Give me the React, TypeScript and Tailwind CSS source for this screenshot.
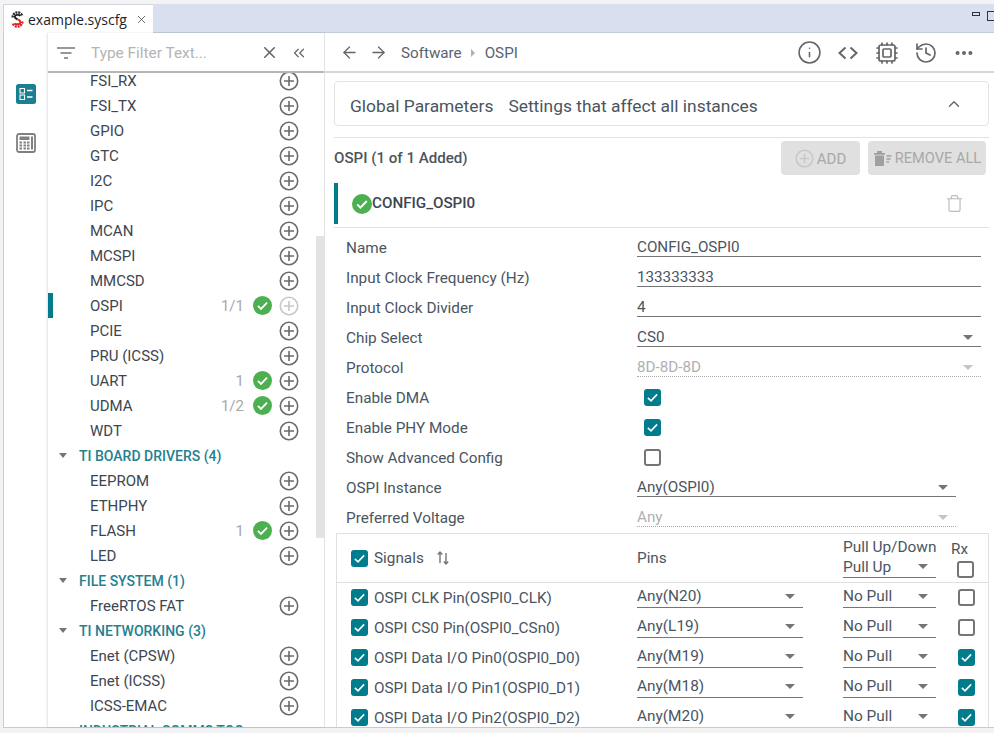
import React from 'react';
import { ArrowLeft, ArrowRight, ChevronsLeft, ChevronUp, Cpu, History, Info, MoreHorizontal, Trash, X } from 'lucide-react';

const TEAL = 'bg-[#007c8c]';

function PlusCircle({ faded, size = 20 }: { faded?: boolean; size?: number }) {
  const color = faded ? '#c8c8c8' : '#6b6b6b';
  return (
    <svg width={size} height={size} viewBox="0 0 20 20" fill="none" stroke={color} strokeWidth="1.6" className="shrink-0">
      <circle cx="10" cy="10" r="8.7" />
      <path d="M10 5v10M5 10h10" />
    </svg>
  );
}

function GreenCheck({ size = 19 }: { size?: number }) {
  return (
    <svg width={size} height={size} viewBox="0 0 20 20" className="shrink-0">
      <circle cx="10" cy="10" r="10" fill="#4caf50" />
      <path d="M5.2 10.4l3.2 3.2 6.4-6.6" fill="none" stroke="#fff" strokeWidth="1.9" />
    </svg>
  );
}

function Check({ on }: { on?: boolean }) {
  if (!on) return <span className="block h-[17px] w-[17px] rounded-[3px] border-2 border-[#757575] bg-white" />;
  return (
    <span className={`flex h-[17px] w-[17px] items-center justify-center rounded-[3px] ${TEAL}`}>
      <svg width="13" height="13" viewBox="0 0 14 14" fill="none" stroke="#fff" strokeWidth="1.7">
        <path d="M2 7.4l3.4 3.2L12 3.6" />
      </svg>
    </span>
  );
}

function Caret({ light }: { light?: boolean }) {
  return <span className={`h-0 w-0 border-x-[5px] border-t-[5px] border-x-transparent ${light ? 'border-t-[#c4c4c4]' : 'border-t-[#757575]'}`} />;
}

function SysCfgLogo() {
  return (
    <svg width="13" height="17" viewBox="0 0 13 17" fill="none" className="shrink-0">
      <path d="M1.6 6.5A5 5 0 0 1 11.4 5" stroke="#333" strokeWidth="2.4" strokeDasharray="2 0.8" />
      <path d="M11.4 10.5A5 5 0 0 1 1.6 12" stroke="#e02020" strokeWidth="2.4" strokeDasharray="2 0.8" />
      <path d="M9.5 4.8C8.5 3.6 4 3.2 3.8 5.8 3.7 7.4 6 8 6.5 8.4" stroke="#222" strokeWidth="1.9" />
      <path d="M6.5 8.4c1.5.4 3 1 2.8 3C9 13.8 4.5 13.6 3.5 12.3" stroke="#e02020" strokeWidth="1.9" />
    </svg>
  );
}

type Item = { name: string; count?: string; ok?: boolean; faded?: boolean; active?: boolean };

function TreeRow({ item }: { item: Item }) {
  return (
    <div className="relative flex h-[25px] items-center pl-[42px] pr-[25px] text-[15px] text-[#3d4650]">
      {item.active && <span className={`absolute bottom-0 left-0 top-0 w-[5px] ${TEAL}`} />}
      <span className="flex-1 pt-[1px]">{item.name}</span>
      {item.count && <span className="mr-[9px] pt-[1px] text-[#a8a8a8]">{item.count}</span>}
      {item.ok && <span className="mr-[7px] flex"><GreenCheck /></span>}
      <PlusCircle faded={item.faded} />
    </div>
  );
}

function GroupRow({ label }: { label: string }) {
  return (
    <div className="flex h-[25px] items-center pl-[11px] text-[14px] font-medium text-[#25808f]">
      <span className="mr-[12px] h-0 w-0 border-x-[4.5px] border-t-[5px] border-x-transparent border-t-[#757575]" />
      <span className="pt-[1px]">{label}</span>
    </div>
  );
}

const groupOne: Item[] = [
  { name: 'FSI_RX' },
  { name: 'FSI_TX' },
  { name: 'GPIO' },
  { name: 'GTC' },
  { name: 'I2C' },
  { name: 'IPC' },
  { name: 'MCAN' },
  { name: 'MCSPI' },
  { name: 'MMCSD' },
  { name: 'OSPI', count: '1/1', ok: true, faded: true, active: true },
  { name: 'PCIE' },
  { name: 'PRU (ICSS)' },
  { name: 'UART', count: '1', ok: true },
  { name: 'UDMA', count: '1/2', ok: true },
  { name: 'WDT' },
];

const boardDrivers: Item[] = [
  { name: 'EEPROM' },
  { name: 'ETHPHY' },
  { name: 'FLASH', count: '1', ok: true },
  { name: 'LED' },
];

const networking: Item[] = [{ name: 'Enet (CPSW)' }, { name: 'Enet (ICSS)' }, { name: 'ICSS-EMAC' }];

function Sidebar() {
  return (
    <aside className="flex w-[277px] shrink-0 flex-col border-r border-[#e2e2e2] bg-white shadow-[-1px_0_2px_rgba(0,0,0,0.12)]">
      <div className="flex h-[40px] shrink-0 items-center border-b-2 border-[#b5b5b5] pl-[9px] pr-[16px] pt-[1px]">
        <svg width="18" height="14" viewBox="0 0 18 14" stroke="#757575" strokeWidth="1.6" className="shrink-0">
          <path d="M0 2h18M3.5 7h11M7 12h4" />
        </svg>
        <span className="ml-[16px] flex-1 pt-[2px] text-[15.4px] text-[#b4b4b4]">Type Filter Text...</span>
        <X size={19} strokeWidth={2} color="#666" className="mr-[11px]" />
        <ChevronsLeft size={18} strokeWidth={1.6} color="#666" />
      </div>
      <div className="relative min-h-0 flex-1 overflow-hidden">
        <div className="mt-[-5px]">
          {groupOne.map((item) => <TreeRow key={item.name} item={item} />)}
          <GroupRow label="TI BOARD DRIVERS (4)" />
          {boardDrivers.map((item) => <TreeRow key={item.name} item={item} />)}
          <GroupRow label="FILE SYSTEM (1)" />
          <TreeRow item={{ name: 'FreeRTOS FAT' }} />
          <GroupRow label="TI NETWORKING (3)" />
          {networking.map((item) => <TreeRow key={item.name} item={item} />)}
          <GroupRow label="INDUSTRIAL COMMS TOO" />
        </div>
        <div className="absolute bottom-0 right-0 top-0 w-[8px] bg-white">
          <div className="mt-[163px] h-[302px] w-full bg-[#e3e3e3]" />
        </div>
      </div>
    </aside>
  );
}

function ConfigRow({ label, children }: { label: string; children: React.ReactNode }) {
  return (
    <div className="flex h-[30px] items-center pl-[12px] text-[15.3px] text-[#4a5560]">
      <span className="w-[291px] shrink-0">{label}</span>
      {children}
    </div>
  );
}

function Field({ value, select, disabled, narrow }: { value: string; select?: boolean; disabled?: boolean; narrow?: boolean }) {
  return (
    <div className={`flex h-[18px] items-center justify-between pr-[8px] text-[15.2px] ${narrow ? 'w-[319px]' : 'w-[344px]'} ${disabled ? 'border-b border-dotted border-[#aaa] text-[#b0b0b0]' : 'border-b border-[#757575] text-[#4a5560]'}`}>
      <span>{value}</span>
      {select && <Caret light={disabled} />}
    </div>
  );
}

function MiniSelect({ value, width }: { value: string; width: string }) {
  return (
    <div className={`mb-[2px] flex h-[21px] shrink-0 items-center justify-between border-b border-[#757575] pr-[8px] text-[15.4px] text-[#4a5560] ${width}`}>
      <span>{value}</span>
      <Caret />
    </div>
  );
}

const signals = [
  { name: 'OSPI CLK Pin(OSPI0_CLK)', pin: 'Any(N20)', rx: false },
  { name: 'OSPI CS0 Pin(OSPI0_CSn0)', pin: 'Any(L19)', rx: false },
  { name: 'OSPI Data I/O Pin0(OSPI0_D0)', pin: 'Any(M19)', rx: true },
  { name: 'OSPI Data I/O Pin1(OSPI0_D1)', pin: 'Any(M18)', rx: true },
  { name: 'OSPI Data I/O Pin2(OSPI0_D2)', pin: 'Any(M20)', rx: true },
];

function SignalsTable() {
  return (
    <div className="ml-[2px] border border-[#e0e0e0] border-b-0">
      <div className="flex h-[49px] items-center border-b border-[#e0e0e0] pl-[14px]">
        <div className="flex w-[286px] shrink-0 items-center">
          <Check on />
          <span className="ml-[6px] text-[15.3px] text-[#4a5560]">Signals</span>
          <svg width="14" height="16" viewBox="0 0 14 16" fill="none" stroke="#757575" strokeWidth="1.4" className="ml-[12px]">
            <path d="M4 13V2M1.8 4.5L4 2l2.2 2.5M10 3v11M7.8 11.5L10 14l2.2-2.5" />
          </svg>
        </div>
        <span className="w-[206px] shrink-0 text-[15.3px] text-[#4a5560]">Pins</span>
        <div className="w-[93px] shrink-0 text-[15.4px] leading-[20px] text-[#4a5560]">
          <div className="whitespace-nowrap">Pull Up/Down</div>
          <MiniSelect value="Pull Up" width="w-[93px]" />
        </div>
        <div className="ml-[15px] flex flex-col text-[15.3px] leading-[20px] text-[#4a5560]">
          <span>Rx</span>
          <span className="ml-[6px] mt-[2px]"><Check /></span>
        </div>
      </div>
      {signals.map((s) => (
        <div key={s.name} className="flex h-[30px] items-center pl-[14px]">
          <div className="flex w-[286px] shrink-0 items-center">
            <span className="mb-[2px]"><Check on /></span>
            <span className="ml-[6px] text-[15.3px] text-[#4a5560]">{s.name}</span>
          </div>
          <div className="w-[206px] shrink-0"><MiniSelect value={s.pin} width="w-[166px]" /></div>
          <MiniSelect value="No Pull" width="w-[93px]" />
          <span className="mb-[2px] ml-[22px]"><Check on={s.rx} /></span>
        </div>
      ))}
    </div>
  );
}

function MainPanel() {
  return (
    <main className="min-w-0 flex-1 overflow-hidden bg-white">
      <div className="flex h-[40px] items-center border-b-2 border-[#d6d6d6] pl-[15px] pr-[19px] pt-[1px] text-[#666]">
        <ArrowLeft size={19} strokeWidth={1.6} />
        <ArrowRight size={19} strokeWidth={1.6} className="ml-[10px]" />
        <span className="ml-[13px] pt-[2px] text-[15.2px] text-[#5a6470]">Software</span>
        <span className="ml-[9px] mr-[10px] h-0 w-0 border-y-[4px] border-l-[4px] border-y-transparent border-l-[#b0b0b0]" />
        <span className="pt-[2px] text-[15.2px] text-[#5a6470]">OSPI</span>
        <span className="flex-1" />
        <Info size={25} strokeWidth={1.5} />
        <svg width="24" height="24" viewBox="0 0 24 24" fill="none" stroke="currentColor" strokeWidth="2" className="ml-[14px]">
          <path d="M9.5 6.5L3.5 12l6 5.5M14.5 6.5l6 5.5-6 5.5" />
        </svg>
        <Cpu size={24} strokeWidth={1.7} className="ml-[15px]" />
        <History size={24} strokeWidth={1.7} className="ml-[15px]" />
        <MoreHorizontal size={22} strokeWidth={2.4} className="ml-[15px]" />
      </div>
      <div className="pl-[9px] pr-[5px]">
        <div className="mt-[8px] flex h-[45px] items-center rounded-[4px] border border-[#e3e3e3] pl-[15px] pr-[25px] text-[17.4px] text-[#4a5560]">
          <span className="pt-[5px]">Global Parameters</span>
          <span className="ml-[15px] flex-1 pt-[5px]">Settings that affect all instances</span>
          <ChevronUp size={18} strokeWidth={1.8} color="#666" />
        </div>
        <div className="mt-[11px] flex h-[41px] items-center border-t border-[#e3e3e3] pr-[3px]">
          <span className="flex-1 text-[15.1px] font-medium text-[#4a5560]">OSPI (1 of 1 Added)</span>
          <div className="flex h-[34px] w-[79px] items-center justify-center rounded-[4px] bg-[#e0e0e0] text-[15px] text-[#a8a8a8]">
            <PlusCircle faded size={19} />
            <span className="ml-[3px] pt-[2px]">ADD</span>
          </div>
          <div className="ml-[8px] flex h-[34px] w-[118px] items-center justify-center rounded-[4px] bg-[#e0e0e0] text-[14.6px] text-[#a8a8a8]">
            <svg width="20" height="17" viewBox="0 0 20 17" className="shrink-0">
              <path d="M1 3h11v1.8H1zM4 1h5v2H4zM2 5.5h9V16H2z" fill="#a0a0a0" />
              <path d="M13.5 6h5M13.5 9h4M13.5 12h2.5" stroke="#a0a0a0" strokeWidth="1.3" />
            </svg>
            <span className="ml-[2px] whitespace-nowrap pt-[2px]">REMOVE ALL</span>
          </div>
        </div>
        <div className="mt-[5px] flex items-start border-b border-[#e3e3e3] pb-[3px] pr-[25px]">
          <span className={`h-[41px] w-[4px] ${TEAL}`} />
          <div className="flex h-[41px] flex-1 items-center">
            <span className="ml-[14px]"><GreenCheck size={20} /></span>
            <span className="flex-1 text-[15.2px] font-medium text-[#3d4650]">CONFIG_OSPI0</span>
            <Trash size={19} strokeWidth={1.5} color="#bdbdbd" />
          </div>
        </div>
        <div className="pt-[5px]">
          <ConfigRow label="Name"><Field value="CONFIG_OSPI0" /></ConfigRow>
          <ConfigRow label="Input Clock Frequency (Hz)"><Field value="133333333" /></ConfigRow>
          <ConfigRow label="Input Clock Divider"><Field value="4" /></ConfigRow>
          <ConfigRow label="Chip Select"><Field value="CS0" select /></ConfigRow>
          <ConfigRow label="Protocol"><Field value="8D-8D-8D" select disabled /></ConfigRow>
          <ConfigRow label="Enable DMA"><span className="mb-[2px] ml-[7px]"><Check on /></span></ConfigRow>
          <ConfigRow label="Enable PHY Mode"><span className="mb-[2px] ml-[7px]"><Check on /></span></ConfigRow>
          <ConfigRow label="Show Advanced Config"><span className="mb-[2px] ml-[7px]"><Check /></span></ConfigRow>
          <ConfigRow label="OSPI Instance"><Field value="Any(OSPI0)" select narrow /></ConfigRow>
          <ConfigRow label="Preferred Voltage"><Field value="Any" select disabled narrow /></ConfigRow>
        </div>
        <SignalsTable />
      </div>
    </main>
  );
}

export default function App() {
  return (
    <div className="flex h-[733px] w-[994px] flex-col overflow-hidden bg-[#f3f3f3] pb-[5px] pl-[3px] pt-[4px] font-['Roboto',sans-serif]">
      <div className="flex h-[29px] shrink-0 justify-between border-b border-[#c4cbdc] bg-[#d8dfee]">
        <div className="flex h-[29px] w-[150px] items-center border-l border-t border-[#d0d5e0] bg-white pl-[7px] text-[#1f2328]">
          <SysCfgLogo />
          <span className="ml-[4px] font-['Open_Sans',sans-serif] text-[14px]">example.syscfg</span>
          <X size={13} strokeWidth={1.3} className="ml-[8px]" color="#333" />
        </div>
        <div className="flex items-start gap-[7px] pt-[7px]">
          <span className="mt-[1px] h-[4px] w-[8px] border border-[#333]" />
          <span className="h-[10px] w-[7px] border border-r-0 border-[#333]" />
        </div>
      </div>
      <div className="flex min-h-0 flex-1 border-b border-l border-[#c4cbdc] bg-white">
        <nav className="flex w-[44px] shrink-0 flex-col items-center pt-[51px]">
          <svg width="20" height="20" viewBox="0 0 20 20">
            <rect width="20" height="20" rx="2.5" fill="#1a7f90" />
            <path d="M4 4.5h4.5V9H4zM4 11h4.5v4.5H4z" fill="none" stroke="#fff" strokeWidth="1.1" />
            <path d="M11 6.5h5.5M11 13h5.5" stroke="#fff" strokeWidth="1.6" />
          </svg>
          <svg width="20" height="20" viewBox="0 0 20 20" fill="none" stroke="#808080" className="mt-[29px]">
            <rect x="1" y="1" width="18" height="18" rx="2" strokeWidth="1.8" />
            <path d="M3.5 3.5h10V7h-10z" fill="#808080" stroke="none" />
            <path d="M15 3.5h2v13h-2z" fill="#808080" stroke="none" />
            <path d="M3.5 8.5H6v2H3.5zM7.5 8.5H10v2H7.5zM11 8.5h2.5v2H11zM3.5 11.5H6v2H3.5zM7.5 11.5H10v2H7.5zM11 11.5h2.5v2H11zM3.5 14.5H6v2H3.5zM7.5 14.5H10v2H7.5zM11 14.5h2.5v2H11z" fill="#808080" stroke="none" />
          </svg>
        </nav>
        <Sidebar />
        <MainPanel />
      </div>
    </div>
  );
}
